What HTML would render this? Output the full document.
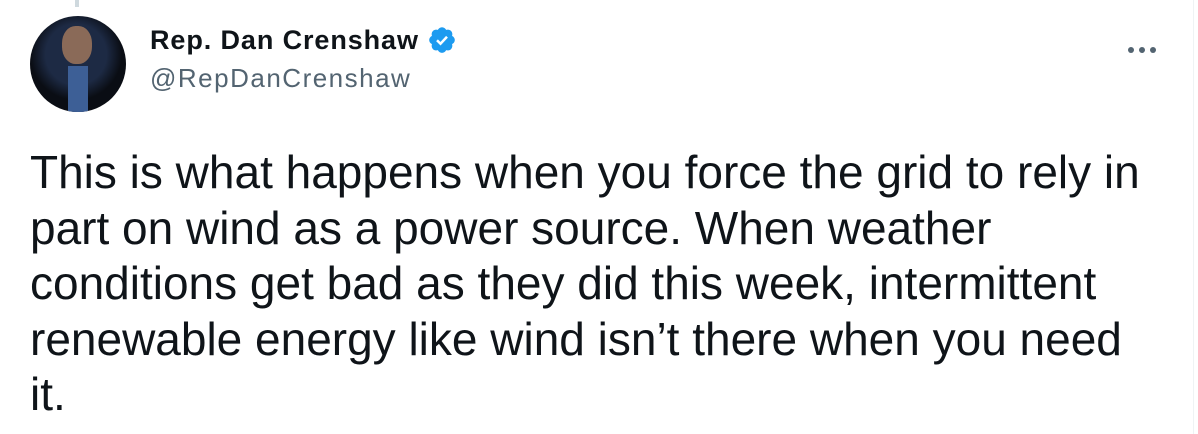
<!DOCTYPE html>
<html><head><style>
body{margin:0;width:1198px;height:434px;background:#fff;overflow:hidden;position:relative;font-family:"Liberation Sans",Arial,sans-serif;}
.vl{position:absolute;left:75px;top:0;width:4px;height:7px;background:#cfd9de;}
.rb{position:absolute;left:1193px;top:0;width:1px;height:434px;background:#eff3f4;}
.av{position:absolute;left:30px;top:16px;width:96px;height:96px;border-radius:50%;background:radial-gradient(circle at 48% 40%,#6b5548 0 12%,#1d2a44 13% 40%,#0a0d14 60%);overflow:hidden;}
.name{position:absolute;left:150px;top:25px;font-size:27px;font-weight:bold;color:#0f1419;letter-spacing:0.9px;white-space:nowrap;}
.handle{position:absolute;left:150px;top:63px;font-size:26px;color:#536471;letter-spacing:1.5px;}
.body{position:absolute;left:30px;top:145px;width:1160px;font-size:46px;line-height:55.5px;color:#0f1419;letter-spacing:0px;white-space:nowrap;}
.dots{position:absolute;left:1128px;top:40px;}
.dots span{display:inline-block;width:6px;height:6px;border-radius:50%;background:#536471;margin-right:5px;}
</style></head><body>
<div class="vl"></div><div class="rb"></div>
<div class="av"><div style="position:absolute;left:38px;top:50px;width:20px;height:46px;background:#3d5f96;"></div><div style="position:absolute;left:32px;top:10px;width:30px;height:38px;border-radius:45%;background:#8a6a58;"></div></div>
<div class="name">Rep. Dan Crenshaw <svg width="30" height="30" viewBox="0 0 24 24" style="vertical-align:-6px"><path fill="#1d9bf0" d="M22.25 12c0-1.430-.88-2.670-2.190-3.340.46-1.390.2-2.900-.81-3.910s-2.520-1.270-3.910-.81c-.66-1.310-1.910-2.190-3.340-2.190s-2.670.88-3.330 2.190c-1.400-.46-2.910-.2-3.920.81s-1.260 2.520-.8 3.910c-1.310.67-2.200 1.910-2.200 3.340s.89 2.670 2.200 3.340c-.46 1.390-.21 2.900.8 3.910s2.520 1.260 3.910.81c.67 1.310 1.910 2.190 3.340 2.190s2.680-.88 3.340-2.190c1.390.45 2.900.2 3.910-.81s1.270-2.520.81-3.910c1.310-.67 2.190-1.910 2.190-3.340z"/><path fill="none" stroke="#fff" stroke-width="2" d="M8 12.2l2.8 2.8 5.2-5.6"/></svg></div>
<div class="handle">@RepDanCrenshaw</div>
<div class="dots"><span></span><span></span><span></span></div>
<div class="body">This is what happens when you force the grid to rely in<br>part on wind as a power source. When weather<br>conditions get bad as they did this week, intermittent<br>renewable energy like wind isn’t there when you need<br>it.</div>
</body></html>
